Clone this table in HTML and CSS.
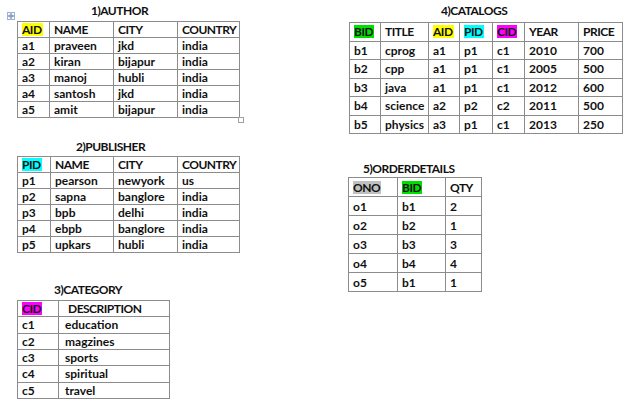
FILE: index.html
```html
<!DOCTYPE html>
<html>
<head>
<meta charset="utf-8">
<link rel="stylesheet" href="styles.css">
</head>
<body>
<main class="page">
  <div class="col col-left">
    <section class="block author">
      <svg class="handle" width="8" height="8" viewBox="0 0 8 8"><rect x="0.5" y="0.5" width="7" height="7" fill="#fff" stroke="#9db3d6"/><path d="M4 1.5V6.5M1.5 4H6.5M3 2.5L4 1.5L5 2.5M3 5.5L4 6.5L5 5.5M2.5 3L1.5 4L2.5 5M5.5 3L6.5 4L5.5 5" fill="none" stroke="#4a6fa8" stroke-width="0.8"/></svg>
      <h2 class="cap cap-author">1)AUTHOR</h2>
      <table class="tbl t-author">
        <colgroup><col class="w32"><col class="w64"><col class="w64"><col class="w62"></colgroup>
        <tr class="head"><td><span class="hl yellow">AID</span></td><td>NAME</td><td>CITY</td><td>COUNTRY</td></tr>
        <tr><td>a1</td><td>praveen</td><td>jkd</td><td>india</td></tr>
        <tr><td>a2</td><td>kiran</td><td>bijapur</td><td>india</td></tr>
        <tr><td>a3</td><td>manoj</td><td>hubli</td><td>india</td></tr>
        <tr><td>a4</td><td>santosh</td><td>jkd</td><td>india</td></tr>
        <tr><td>a5</td><td>amit</td><td>bijapur</td><td>india</td></tr>
      </table>
      <span class="resize"></span>
    </section>

    <section class="block publisher">
      <h2 class="cap cap-publisher">2)PUBLISHER</h2>
      <table class="tbl t-publisher">
        <colgroup><col class="w33"><col class="w63"><col class="w64"><col class="w62"></colgroup>
        <tr class="head"><td><span class="hl cyan">PID</span></td><td>NAME</td><td>CITY</td><td>COUNTRY</td></tr>
        <tr><td>p1</td><td>pearson</td><td>newyork</td><td>us</td></tr>
        <tr><td>p2</td><td>sapna</td><td>banglore</td><td>india</td></tr>
        <tr><td>p3</td><td>bpb</td><td>delhi</td><td>india</td></tr>
        <tr><td>p4</td><td>ebpb</td><td>banglore</td><td>india</td></tr>
        <tr><td>p5</td><td>upkars</td><td>hubli</td><td>india</td></tr>
      </table>
    </section>

    <section class="block category">
      <h2 class="cap cap-category">3)CATEGORY</h2>
      <table class="tbl t-category">
        <colgroup><col class="w41"><col class="w111"></colgroup>
        <tr class="head"><td><span class="hl magenta">CID</span></td><td class="desc-head">DESCRIPTION</td></tr>
        <tr><td>c1</td><td class="desc">education</td></tr>
        <tr><td>c2</td><td class="desc">magzines</td></tr>
        <tr><td>c3</td><td class="desc">sports</td></tr>
        <tr><td>c4</td><td class="desc">spiritual</td></tr>
        <tr><td>c5</td><td class="desc">travel</td></tr>
      </table>
    </section>
  </div>

  <div class="col col-right">
    <section class="block catalogs">
      <h2 class="cap cap-catalogs">4)CATALOGS</h2>
      <table class="tbl t-catalogs">
        <colgroup><col class="w31"><col class="w48"><col class="w31"><col class="w33"><col class="w32"><col class="w54"><col class="w44"></colgroup>
        <tr class="head"><td><span class="hl green">BID</span></td><td>TITLE</td><td><span class="hl yellow">AID</span></td><td><span class="hl cyan">PID</span></td><td><span class="hl magenta">CID</span></td><td>YEAR</td><td>PRICE</td></tr>
        <tr><td>b1</td><td>cprog</td><td>a1</td><td>p1</td><td>c1</td><td>2010</td><td>700</td></tr>
        <tr><td>b2</td><td>cpp</td><td>a1</td><td>p1</td><td>c1</td><td>2005</td><td>500</td></tr>
        <tr><td>b3</td><td>java</td><td>a1</td><td>p1</td><td>c1</td><td>2012</td><td>600</td></tr>
        <tr><td>b4</td><td>science</td><td>a2</td><td>p2</td><td>c2</td><td>2011</td><td>500</td></tr>
        <tr><td>b5</td><td>physics</td><td>a3</td><td>p1</td><td>c1</td><td>2013</td><td>250</td></tr>
      </table>
    </section>

    <section class="block orders">
      <h2 class="cap cap-orders">5)ORDERDETAILS</h2>
      <table class="tbl t-orders">
        <colgroup><col class="w49"><col class="w48"><col class="w36"></colgroup>
        <tr class="head"><td><span class="hl gray">ONO</span></td><td><span class="hl green">BID</span></td><td>QTY</td></tr>
        <tr><td>o1</td><td>b1</td><td>2</td></tr>
        <tr><td>o2</td><td>b2</td><td>1</td></tr>
        <tr><td>o3</td><td>b3</td><td>3</td></tr>
        <tr><td>o4</td><td>b4</td><td>4</td></tr>
        <tr><td>o5</td><td>b1</td><td>1</td></tr>
      </table>
    </section>
  </div>
</main>
</body>
</html>
```

FILE: styles.css
```css
html, body {
  margin: 0;
  padding: 0;
  background: #ffffff;
}

body {
  width: 640px;
  height: 409px;
  overflow: hidden;
  font-family: Lato, "Liberation Sans", sans-serif;
  font-weight: 700;
  font-size: 12px;
  color: #111111;
}

.page {
  display: flex;
  align-items: flex-start;
}

.col {
  display: flex;
  flex-direction: column;
}

.col-left {
  margin-left: 17px;
}

.col-right {
  margin-left: 108px;
}

.block {
  position: relative;
}

.cap {
  margin: 0 0 2px 0;
  height: 16px;
  line-height: 16px;
  font-size: 12px;
  font-weight: 700;
  letter-spacing: -0.5px;
  white-space: nowrap;
}

.author { margin-top: 3px; }
.publisher { margin-top: 21px; }
.category { margin-top: 29px; }
.catalogs { margin-top: 3px; margin-left: 1px; }
.orders { margin-top: 27px; }

.cap-author { padding-left: 74px; }
.cap-publisher { padding-left: 59px; margin-bottom: 1px; }
.cap-category { padding-left: 37px; }
.cap-catalogs { padding-left: 92px; margin-bottom: 3px; }
.cap-orders { padding-left: 15px; margin-bottom: 0; }

.tbl {
  border-collapse: collapse;
  table-layout: fixed;
}

.tbl td {
  border: 1px solid #8c8c8c;
  padding: 0 0 0 4px;
  height: 15px;
  line-height: 15px;
  white-space: nowrap;
  overflow: hidden;
  vertical-align: middle;
}

.tbl .head td {
  letter-spacing: -0.5px;
}

.t-author, .t-publisher { width: 222px; }
.t-category { width: 152px; }
.t-category td { height: 15.33px; }
.t-catalogs { width: 273px; }
.t-catalogs td { height: 17.5px; }
.t-orders { width: 133px; }
.t-orders td { height: 18px; }

.t-category .desc { padding-left: 6px; }
.t-category .desc-head { padding-left: 9px; }

.w31 { width: 31px; }
.w32 { width: 32px; }
.w33 { width: 33px; }
.w36 { width: 36px; }
.w41 { width: 41px; }
.w44 { width: 44px; }
.w48 { width: 48px; }
.w49 { width: 49px; }
.w54 { width: 54px; }
.w62 { width: 62px; }
.w63 { width: 63px; }
.w64 { width: 64px; }
.w111 { width: 111px; }

.hl {
  display: inline-block;
  line-height: 13px;
  padding: 0 1px 0 0;
}

.yellow { background: #ffff00; }
.cyan { background: #00ffff; }
.magenta { background: #ff00ff; }
.green { background: #00e000; }
.gray { background: #c0c0c0; }

.handle {
  position: absolute;
  left: -10px;
  top: 9px;
  display: block;
}

.resize {
  position: absolute;
  right: -4px;
  bottom: -5px;
  width: 4px;
  height: 4px;
  border: 1px solid #a0a0a0;
  background: #fff;
}
```
